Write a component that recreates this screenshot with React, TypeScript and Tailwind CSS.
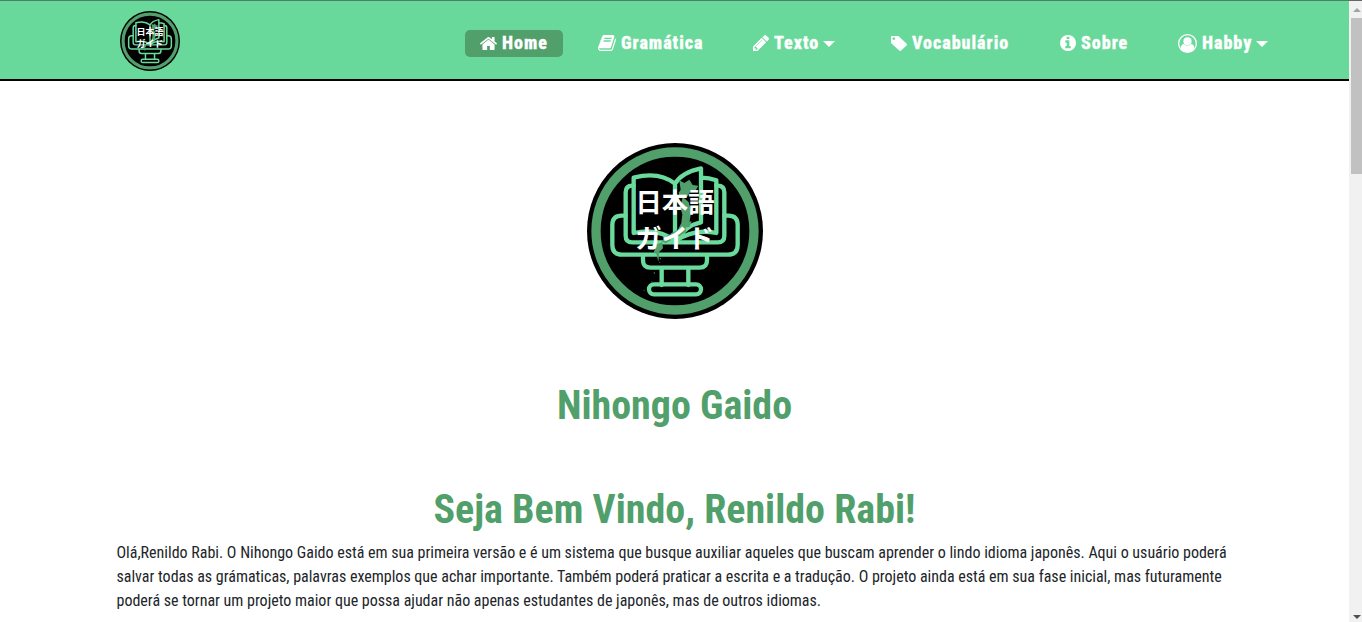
import type { ReactNode } from "react";

const icons = {
  home: "M1472 992v480q0 26-19 45t-45 19h-384v-384h-256v384h-384q-26 0-45-19t-19-45v-480q0-1 .5-3t.5-3l575-474 575 474q1 2 1 6zm223-69l-62 74q-8 9-21 11h-3q-13 0-21-7l-692-577-692 577q-12 8-24 7-13-2-21-11l-62-74q-8-10-7-23.5t11-21.5l719-599q32-26 76-26t76 26l244 204v-195q0-14 9-23t23-9h192q14 0 23 9t9 23v408l219 182q10 8 11 21.5t-7 23.5z",
  book: "M1703 478q40 57 18 129l-275 906q-19 64-76.5 107.5t-122.5 43.5h-923q-77 0-148.5-53.5t-99.5-131.5q-24-67-2-127 0-4 3-27t4-37q1-8-3-21.5t-3-19.5q2-11 8-21t16.5-23.5 16.5-23.5q23-38 45-91.5t30-91.5q3-10 .5-30t-.5-28q3-11 17-28t17-23q21-36 42-92t25-90q1-9-2.5-32t.5-28q4-13 22-30.5t22-22.5q19-26 42.5-84.5t27.5-96.5q1-8-3-25.5t-2-26.5q2-8 9-18t18-23 17-21q8-12 16.5-30.5t15-35 16-36 19.5-32 26.5-23.5 36-11.5 47.5 5.5l-1 3q38-9 51-9h761q74 0 114 56t18 130l-274 906q-36 119-71.5 153.5t-128.5 34.5h-869q-27 0-38 15-11 16-1 43 24 70 144 70h923q29 0 56-15.5t35-41.5l300-987q7-22 5-57 38 15 59 43zm-1064 2q-4 13 2 22.5t20 9.5h608q13 0 25.5-9.5t16.5-22.5l21-64q4-13-2-22.5t-20-9.5h-608q-13 0-25.5 9.5t-16.5 22.5zm-83 256q-4 13 2 22.5t20 9.5h608q13 0 25.5-9.5t16.5-22.5l21-64q4-13-2-22.5t-20-9.5h-608q-13 0-25.5 9.5t-16.5 22.5z",
  pencil: "M491 1536l91-91-235-235-91 91v107h128v128h107zm523-928q0-22-22-22-10 0-17 7l-542 542q-7 7-7 17 0 22 22 22 10 0 17-7l542-542q7-7 7-17zm-54-192l416 416-832 832h-416v-416zm683 96q0 53-37 90l-166 166-416-416 166-165q36-38 90-38 53 0 91 38l235 234q37 39 37 91z",
  tag: "M576 448q0-53-37.5-90.5t-90.5-37.5-90.5 37.5-37.5 90.5 37.5 90.5 90.5 37.5 90.5-37.5 37.5-90.5zm1067 576q0 53-37 90l-491 492q-39 37-91 37-53 0-90-37l-715-716q-38-37-64.5-101t-26.5-117v-416q0-52 38-90t90-38h416q53 0 117 26.5t102 64.5l715 714q37 39 37 91z",
  info: "M1152 1376v-160q0-14-9-23t-23-9h-96v-512q0-14-9-23t-23-9h-320q-14 0-23 9t-9 23v160q0 14 9 23t23 9h96v320h-96q-14 0-23 9t-9 23v160q0 14 9 23t23 9h448q14 0 23-9t9-23zm-128-896v-160q0-14-9-23t-23-9h-192q-14 0-23 9t-9 23v160q0 14 9 23t23 9h192q14 0 23-9t9-23zm640 416q0 209-103 385.5t-279.5 279.5-385.5 103-385.5-103-279.5-279.5-103-385.5 103-385.5 279.5-279.5 385.5-103 385.5 103 279.5 279.5 103 385.5z",
};

function Icon({ name, view, className }: { name: keyof typeof icons; view: string; className: string }) {
  return (
    <svg viewBox={view} className={className} fill="currentColor" preserveAspectRatio="none">
      <path d={icons[name]} />
    </svg>
  );
}

function UserIcon() {
  return (
    <svg viewBox="0 0 18 18" className="h-[19px] w-[19px]" fill="none">
      <circle cx="9" cy="9" r="8.4" stroke="currentColor" strokeWidth="1.2" />
      <circle cx="9" cy="6.9" r="3.9" fill="currentColor" />
      <path d="M2.4 13.4C2.800 10.900 4.100 9.600 5.500 9.500a4.800 4.800 0 0 0 7 0c1.400.1 2.700 1.400 3.100 3.900A8 8 0 0 1 9 17.300a8 8 0 0 1-6.600-3.900Z" fill="currentColor" />
    </svg>
  );
}

function Logo({ className }: { className: string }) {
  return (
    <svg viewBox="36 24 528 528" className={className} role="img" aria-label="Nihongo Gaido">
      <circle cx="300" cy="288" r="264" fill="#000" />
      <circle cx="300" cy="288" r="237" fill="none" stroke="#519f6b" strokeWidth="28" />
      <g fill="none" stroke="#6adb9c" strokeWidth="13" strokeLinejoin="round" strokeLinecap="round">
        <path d="M152 242h-12q-28 0-28 28v60q0 29 29 29h318q29 0 29-29v-60q0-28-28-28h-12" />
        <path d="M176 152h-4q-20 0-20 20v130q0 20 20 20h256q20 0 20-20V172q0-20-20-20h-4" />
        <path d="M300 146q-48-38-124-18v166q74-16 124 24V146q20-34 78-46v162q-44 8-78 56M380 128q22 0 44 8v158q-66-14-124 24" />
        <path d="M204 362v14q0 22 22 22h148q22 0 22-22v-14M260 400v50M340 400v50" />
        <rect x="222" y="448" width="156" height="30" rx="15" />
      </g>
      <g fill="#519f6b">
        <path d="M313 136l15 8 15-10 10 16 17 2-9 16-17 5-8 13-12-6-9 10-4-17 6-9zM323 186l18 15 8 29-5 28-14 22-20 12-13 14-17 3 8-14 21-11 10-20 3-26-6-20zM313 276l18-5 2 19-19 13-15-2zM278 300l18-4-8 17-15 12-14-6zM240 330l22-8 2 18-11 10-3 30-6-24-8-4 4-10zM330 262l20-3-6 16-16 4z" />
        <circle cx="256" cy="371" r="2" />
        <circle cx="254" cy="382" r="1.500" />
        <circle cx="238" cy="414" r="2" />
        <circle cx="231" cy="440" r="1.500" />
        <circle cx="207" cy="466" r="1.500" />
      </g>
      <g
        fill="#fff"
        textAnchor="middle"
        className="font-['Noto_Sans_CJK_JP',sans-serif] text-[79px] font-bold"
      >
        <text x="300" y="232">日本語</text>
        <text x="299" y="340">ガイド</text>
      </g>
    </svg>
  );
}

function NavItem({ icon, label, caret, active }: { icon: ReactNode; label: string; caret?: boolean; active?: boolean }) {
  return (
    <li className="flex">
      <a
        className={
          active
            ? "flex h-[27px] w-[98px] items-center rounded-[5px] bg-[#519f6b] pb-px pl-[15px]"
            : "flex h-[27px] items-center px-[15px] pb-px"
        }
      >
        {icon}
        <span className="ml-[5px] whitespace-nowrap [-webkit-text-stroke:0.3px_white]">{label}</span>
        {caret && (
          <svg viewBox="0 0 12 6" className="mt-px ml-[4px] h-[6px] w-[12px]" fill="currentColor">
            <path d="M0 0h12L6 6z" />
          </svg>
        )}
      </a>
    </li>
  );
}

export default function App() {
  return (
    <div className="flex h-[622px] w-[1362px] overflow-hidden bg-white font-['Roboto_Condensed',Roboto,sans-serif] [font-stretch:75%]">
      <div className="flex w-[1349px] flex-col">
        <header className="flex h-[81px] border-t border-b-2 border-t-[#4f7f66] border-b-black bg-[#69d99b] pt-[10px] pl-[120px]">
          <Logo className="h-[60px] w-[60px]" />
          <ul className="mt-[19px] ml-[285px] grid h-[27px] grid-cols-[118px_155px_138px_169px_118px_120px] text-[18px] leading-[26px] font-extrabold tracking-[1px] text-white">
            <NavItem active icon={<Icon name="home" view="89 253 1614 1283" className="h-[13px] w-[17px]" />} label="Home" />
            <NavItem icon={<Icon name="book" view="64 128 1664 1536" className="h-[16px] w-[18px]" />} label="Gramática" />
            <NavItem icon={<Icon name="pencil" view="128 149 1515 1515" className="h-[16px] w-[16px]" />} label="Texto" caret />
            <NavItem icon={<Icon name="tag" view="192 192 1451 1451" className="h-[15px] w-[16px]" />} label="Vocabulário" />
            <NavItem icon={<Icon name="info" view="128 128 1536 1536" className="h-[16px] w-[16px]" />} label="Sobre" />
            <NavItem icon={<UserIcon />} label="Habby" caret />
          </ul>
        </header>
        <main className="flex flex-col items-center">
          <Logo className="mt-[62px] h-[176px] w-[176px]" />
          <h1 className="mt-[63px] text-[40px] leading-[48px] font-bold whitespace-nowrap text-[#519f6b]">Nihongo Gaido</h1>
          <h1 className="mt-[56px] text-[40px] leading-[48px] font-bold whitespace-nowrap text-[#519f6b]">
            Seja Bem Vindo, Renildo Rabi!
          </h1>
          <p className="mt-[7px] w-[1116px] text-[16px] leading-[24px] tracking-[-0.005px] whitespace-nowrap text-[#212529]">
            Olá,Renildo Rabi. O Nihongo Gaido está em sua primeira versão e é um sistema que busque auxiliar aqueles que buscam aprender o lindo idioma japonês. Aqui o usuário poderá
            <br />
            salvar todas as grámaticas, palavras exemplos que achar importante. Também poderá praticar a escrita e a tradução. O projeto ainda está em sua fase inicial, mas futuramente
            <br />
            poderá se tornar um projeto maior que possa ajudar não apenas estudantes de japonês, mas de outros idiomas.
          </p>
        </main>
      </div>
      <div className="flex w-[13px] flex-col border-t border-t-[#666] bg-[#f1f1f1] pl-[2px]">
        <div className="flex h-[17px] items-center justify-center">
          <svg viewBox="0 0 8 4" className="h-[4px] w-[8px]" fill="#a3a3a3">
            <path d="M0 4h8L4 0z" />
          </svg>
        </div>
        <div className="h-[156px] bg-[#c1c1c1]" />
        <div className="mt-auto flex h-[11px] justify-center pt-[4px]">
          <svg viewBox="0 0 8 4" className="h-[4px] w-[8px]" fill="#505050">
            <path d="M0 0h8L4 4z" />
          </svg>
        </div>
      </div>
    </div>
  );
}
